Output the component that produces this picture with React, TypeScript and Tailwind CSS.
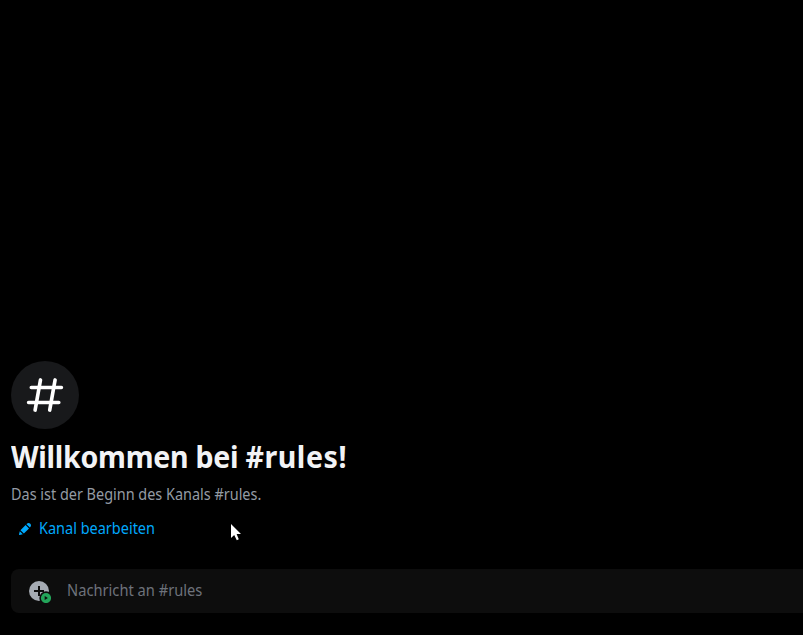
import React from "react";

function HashIcon() {
  return (
    <svg width="68" height="68" viewBox="0 0 68 68" fill="none" stroke="#ffffff" strokeWidth="3.6" strokeLinecap="round" aria-hidden="true">
      <path d="M20.3 26.5h30.1M17.6 41.5h30.2" />
      <path d="M29.5 18.9 24.1 49.1M44.1 18.9 38.7 49.1" />
    </svg>
  );
}

function PencilIcon() {
  return (
    <svg width="16" height="16" viewBox="0 0 24 24" fill="#00a8fc" aria-hidden="true">
      <path
        fillRule="evenodd"
        clipRule="evenodd"
        d="M19.2929 9.8299L19.9409 9.18278C21.353 7.77064 21.353 5.47197 19.9409 4.05892C18.5287 2.64678 16.2292 2.64678 14.817 4.05892L14.1699 4.70694L19.2929 9.8299ZM12.8962 5.97688L5.18469 13.6906L10.3085 18.813L18.0201 11.0992L12.8962 5.97688ZM4.11851 20.9704L8.75906 19.8112L4.18692 15.239L3.02678 19.8796C2.95028 20.1856 3.04028 20.5105 3.26349 20.7337C3.48669 20.9569 3.8116 21.046 4.11851 20.9704Z"
      />
    </svg>
  );
}

function AttachIcon() {
  return (
    <svg width="24" height="24" viewBox="0 0 24 24" aria-hidden="true">
      <circle cx="12" cy="12" r="10" fill="#a5abb3" />
      <path d="M12 7v10M7 12h10" stroke="#0d0d0d" strokeWidth="2" />
      <circle cx="19" cy="19" r="6.7" fill="#0d0d0d" />
      <circle cx="19" cy="19" r="5.1" fill="#23a55a" />
      <path d="M17.7 16.9v4.2l3.2-2.1Z" fill="#0d0d0d" />
    </svg>
  );
}

function Cursor() {
  return (
    <svg className="absolute left-[230px] top-[523px]" width="13" height="19" viewBox="0 0 13 19" aria-hidden="true">
      <path d="M1 1v14l3.2-3L6.8 17.2l2-.9L6.6 11H11Z" fill="#ffffff" />
    </svg>
  );
}

export default function App() {
  return (
    <main className="relative flex h-[635px] w-full flex-col justify-end overflow-hidden bg-black pl-[11px] font-['Noto_Sans',sans-serif]">
      <section className="flex flex-col items-start">
        <div className="size-[68px] rounded-full bg-[#18191b]">
          <HashIcon />
        </div>
        <h1 className="mt-2 h-10 origin-left scale-x-[0.921] whitespace-nowrap text-[31px] leading-[38px] font-bold text-[#f2f3f5]">
          <span className="tracking-[-0.29px]">Willkommen bei </span>
          <span className="tracking-[0.6px]">#rules!</span>
        </h1>
        <p className="mt-2 h-5 origin-left scale-x-[0.902] whitespace-nowrap text-base leading-[18px] text-[#949ba4]">
          Das ist der Beginn des Kanals #rules.
        </p>
        <button className="mt-2 flex h-8 items-center gap-1.5 pl-1.5 text-base text-[#00a8fc]">
          <PencilIcon />
          <span className="origin-left scale-x-[0.905] pb-0.5">Kanal bearbeiten</span>
        </button>
      </section>
      <div className="mt-6 mb-[22px] flex h-11 shrink-0 items-center gap-4 rounded-l-lg bg-[#0d0d0d] pl-4">
        <AttachIcon />
        <span className="origin-left scale-x-[0.917] pb-0.5 text-base text-[#6d727b]">Nachricht an #rules</span>
      </div>
      <Cursor />
    </main>
  );
}
